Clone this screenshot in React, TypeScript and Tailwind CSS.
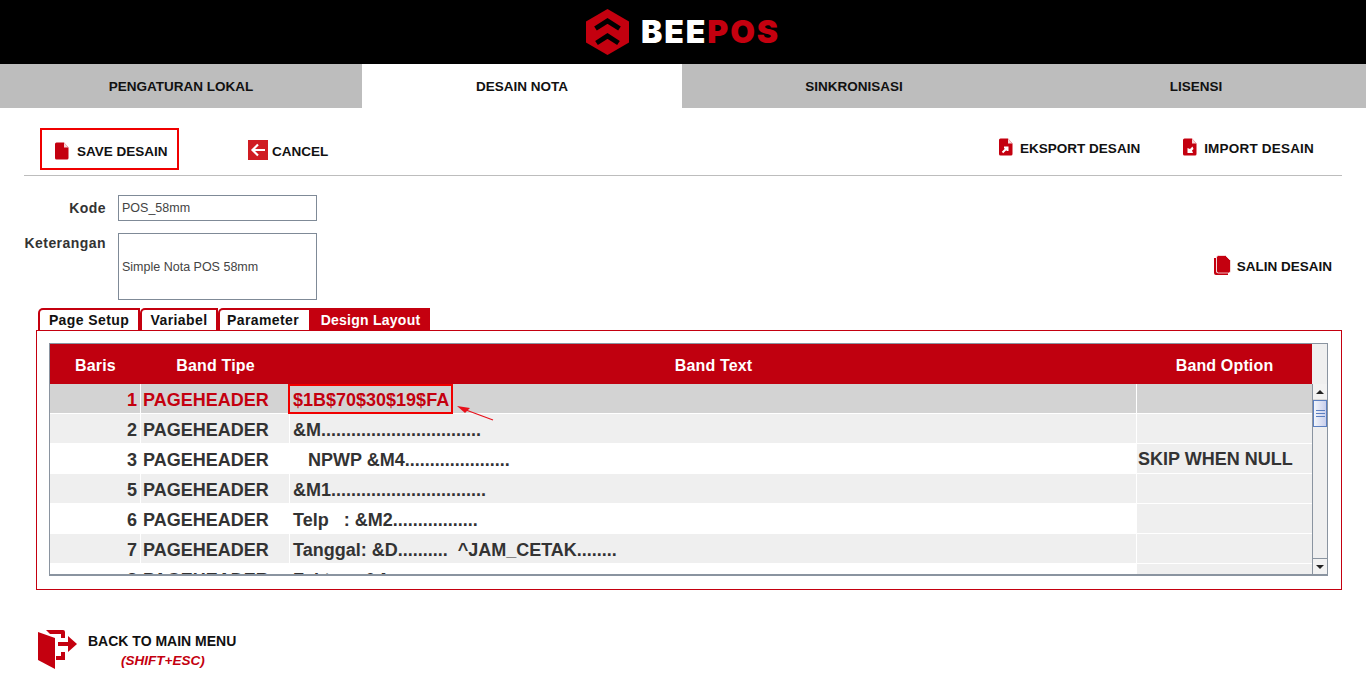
function FileIcon({ children }: { children?: React.ReactNode }) {
  return (
    <svg viewBox="0 0 14 18" className="w-[14px] h-[18px] shrink-0">
      <path d="M1.500 0.500h7.500l4.500 5V16a1.500 1.500 0 0 1-1.500 1.500H1.500A1.500 1.500 0 0 1 0 16V2A1.500 1.500 0 0 1 1.500 0.500z" fill="#c4000f" />
      <path d="M9 0.500l4.500 5h-4.500z" fill="#f6d5d7" />
      {children}
    </svg>
  );
}

function Logo() {
  return (
    <div className="flex items-center justify-center h-16 bg-black">
      <svg viewBox="0 0 43 46" className="w-[43px] h-[46px] mr-[12px]">
        <path d="M21.500 0L43 12.500V33.500L21.500 46L0 33.500V12.500z" fill="#c4000f" />
        <path d="M9.500 19.500L21.500 12L33.500 19.500" stroke="#000" strokeWidth="5" fill="none" />
        <path d="M10.500 34L21.500 27L32.500 34" stroke="#000" strokeWidth="5" fill="none" />
      </svg>
      <span className="font-['Inter',sans-serif] font-black text-[32px] leading-none tracking-[1.900px] text-white">
        BEE<span className="text-[#c4000f]">POS</span>
      </span>
    </div>
  );
}

const navItems = [
  { label: "PENGATURAN LOKAL", width: "w-[362px]" },
  { label: "DESAIN NOTA", width: "w-[320px]", active: true },
  { label: "SINKRONISASI", width: "w-[344px]" },
  { label: "LISENSI", width: "w-[340px]" },
];

const tabs = [
  { label: "Page Setup", width: "w-[102px]" },
  { label: "Variabel", width: "w-[78px]" },
  { label: "Parameter", width: "w-[93px] pr-[3px]" },
];

const rows = [
  { no: "1", text: "$1B$70$30$19$FA", option: "", selected: true },
  { no: "2", text: "&M................................", option: "", shade: true },
  { no: "3", text: "   NPWP &M4.....................", option: "SKIP WHEN NULL" },
  { no: "5", text: "&M1...............................", option: "", shade: true },
  { no: "6", text: "Telp   : &M2.................", option: "" },
  { no: "7", text: "Tanggal: &D..........  ^JAM_CETAK........", option: "", shade: true },
  { no: "8", text: "Faktur : &A", option: "" },
];

function Row({ row }: { row: (typeof rows)[number] }) {
  const bg = row.selected ? "bg-[#d3d3d3]" : row.shade ? "bg-[#efefef]" : "bg-white";
  const color = row.selected ? "text-[#c4000f]" : "text-[#333]";
  return (
    <div className={`flex h-[30px] shrink-0 border-b border-white font-bold text-[18px] leading-[33px] whitespace-pre ${color}`}>
      <div className={`w-[91px] pr-[3px] text-right border-r border-white ${bg}`}>{row.no}</div>
      <div className={`w-[149px] pl-[2px] border-r border-white ${bg}`}>PAGEHEADER</div>
      <div className={`relative w-[847px] pl-[3px] border-r border-white ${bg}`}>
        {row.text}
        {row.selected && (
          <>
            <div className="absolute left-[-2px] top-0 w-[165px] h-[30px] border-2 border-[#f00000]" />
            <svg viewBox="0 0 40 16" className="absolute z-10 left-[166px] top-[21px] w-[40px] h-[16px]">
              <path d="M37 15L10 5" stroke="#e8101a" strokeWidth="1.200" />
              <path d="M1 1L14 3L9 8z" fill="#e8101a" />
            </svg>
          </>
        )}
      </div>
      <div className={`w-[175px] pl-[1px] leading-[31px] ${row.selected ? "bg-[#d3d3d3]" : "bg-[#efefef]"}`}>{row.option}</div>
    </div>
  );
}

function Scrollbar() {
  return (
    <div className="w-[15px] flex flex-col bg-[#efefef] border-l border-[#8a94a0]">
      <div className="h-[16px] flex items-center justify-center border-b border-[#d8d8d8] bg-[#f2f2f2]">
        <div className="w-0 h-0 border-x-4 border-x-transparent border-b-4 border-b-[#222]" />
      </div>
      <div className="h-[27px] flex flex-col items-center justify-center gap-[2px] border border-[#5b7fc0] bg-linear-to-r from-[#f2f6fb] to-[#c9cfec]">
        <div className="w-[9px] h-px bg-[#5b7fc0]" />
        <div className="w-[9px] h-px bg-[#5b7fc0]" />
        <div className="w-[9px] h-px bg-[#5b7fc0]" />
      </div>
      <div className="flex-1" />
      <div className="h-[16px] flex items-center justify-center border-t border-[#8a94a0] bg-[#f2f2f2]">
        <div className="w-0 h-0 border-x-4 border-x-transparent border-t-4 border-t-[#222]" />
      </div>
    </div>
  );
}

export default function App() {
  return (
    <div className="w-[1366px] h-[682px] overflow-hidden bg-white font-['Liberation_Sans',Arial,sans-serif]">
      <Logo />

      <nav className="flex h-[44px] bg-[#bdbdbd]">
        {navItems.map((item) => (
          <div
            key={item.label}
            className={`${item.width} flex items-center justify-center pt-[3px] text-[13.500px] font-bold text-[#111] ${item.active ? "bg-white" : ""}`}
          >
            {item.label}
          </div>
        ))}
      </nav>

      <div className="mx-6 h-[68px] flex justify-between border-b border-[#bdbdbd] pt-5 pl-4 pr-[28px] text-[13.500px] leading-5 font-bold text-[#111]">
        <div className="flex items-start">
          <button className="w-[139px] h-[42px] flex items-start gap-2 pl-[13px] pt-[11px] border-2 border-[#f00000]">
            <span className="mt-px">
              <FileIcon />
            </span>
            <span className="mt-px">SAVE DESAIN</span>
          </button>
          <button className="ml-[69px] mt-[12px] flex items-start gap-1">
            <svg viewBox="0 0 20 20" className="w-[20px] h-[20px] bg-[#d01c22]">
              <path d="M17 10H5M10 4.500L4.500 10L10 15.500" stroke="#fff" strokeWidth="2.200" fill="none" />
            </svg>
            <span className="mt-[2px]">CANCEL</span>
          </button>
        </div>
        <div className="flex items-start gap-[43px] pt-[10px]">
          <button className="flex items-start gap-[7px]">
            <FileIcon>
              <path d="M3.500 14.500L8 10M5 9.500h3.500V13" stroke="#fff" strokeWidth="2" fill="none" />
            </FileIcon>
            <span className="mt-px">EKSPORT DESAIN</span>
          </button>
          <button className="flex items-start gap-[7px] tracking-[0.2px]">
            <FileIcon>
              <path d="M9.500 8.500L10.500 11L9 12.500L10 15H4.500V10L7 11z" fill="#fff" />
            </FileIcon>
            <span className="mt-px">IMPORT DESAIN</span>
          </button>
        </div>
      </div>

      <div className="relative flex flex-col gap-3 ml-6 mt-[19px] text-[14px] text-[#333]">
        <div className="flex items-center gap-3">
          <label className="w-[82px] text-right font-bold tracking-[0.45px]">Kode</label>
          <div className="w-[199px] h-[26px] flex items-center pl-[3px] border border-[#7f8a97] text-[12.500px] text-[#444]">POS_58mm</div>
        </div>
        <div className="flex items-start gap-3">
          <label className="w-[82px] text-right font-bold tracking-[0.45px]">Keterangan</label>
          <div className="w-[199px] h-[67px] flex items-center pl-[3px] pt-px border border-[#7f8a97] text-[12.500px] text-[#444]">Simple Nota POS 58mm</div>
        </div>
        <button className="absolute right-[34px] top-[60px] flex items-start gap-[6px] text-[13.500px] leading-5 font-bold text-[#111]">
          <svg viewBox="0 0 17 20" className="w-[17px] h-[20px]">
            <path d="M0 3V18a2 2 0 0 0 2 2H14V18H4a2 2 0 0 1-2-2V3z" fill="#c4000f" />
            <path d="M4.500 0.500h7l5 5V16a2 2 0 0 1-2 2H4.500A2 2 0 0 1 2.500 16V2.500A2 2 0 0 1 4.500 0.500z" fill="#c4000f" stroke="#fff" strokeWidth="0.700" />
          </svg>
          <span className="mt-[2px]">SALIN DESAIN</span>
        </button>
      </div>

      <div className="flex ml-[38px] mt-2 h-[22px] text-[14px] font-bold tracking-[0.4px]">
        {tabs.map((tab) => (
          <div
            key={tab.label}
            className={`${tab.width} flex items-center justify-center pt-px border-2 border-b-0 border-[#c4000f] rounded-tl-[5px] text-[#111]`}
          >
            {tab.label}
          </div>
        ))}
        <div className="w-[119px] flex items-center justify-center pt-[2px] bg-[#c4000f] text-white tracking-[0.25px]">Design Layout</div>
      </div>

      <div className="mx-9 w-[1306px] h-[260px] border border-[#c4000f] pt-3 pl-3">
        <div className="w-[1279px] h-[233px] flex flex-col border border-[#8a94a0] border-b-2 overflow-hidden">
          <div className="flex h-10 shrink-0 text-[16px] tracking-[0.15px] font-bold text-white">
            <div className="w-[1262px] flex items-center pt-[3px] bg-[#c0000f]">
              <div className="w-[91px] text-center">Baris</div>
              <div className="w-[149px] text-center">Band Tipe</div>
              <div className="w-[847px] text-center">Band Text</div>
              <div className="w-[175px] text-center">Band Option</div>
            </div>
            <div className="flex-1 bg-[#efefef]" />
          </div>
          <div className="flex flex-1 min-h-0">
            <div className="w-[1262px] flex flex-col overflow-hidden">
              {rows.map((row) => (
                <Row key={row.no} row={row} />
              ))}
            </div>
            <Scrollbar />
          </div>
        </div>
      </div>

      <div className="flex items-start ml-[38px] mt-[40px]">
        <svg viewBox="0 0 40 40" className="w-[40px] h-[40px]">
          <path d="M0 2L17 8V39L0 30z" fill="#c4000f" />
          <path d="M8 0H25a2 2 0 0 1 2 2V8H23V4H12zM27 22V30H18V26H23V22z" fill="#c4000f" />
          <path d="M20 12H30V6L39 14L30 22V16H20z" fill="#c4000f" />
        </svg>
        <div className="ml-[10px] font-bold leading-[19px] text-[#111] mt-[2px]">
          <div className="text-[14px]">BACK TO MAIN MENU</div>
          <div className="italic text-[13.500px] text-[#c4000f] ml-[33px]">(SHIFT+ESC)</div>
        </div>
      </div>
    </div>
  );
}
